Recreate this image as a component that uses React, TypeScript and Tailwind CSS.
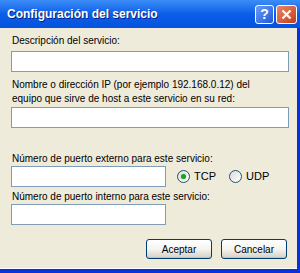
import React from "react"

function XpInput({ className = "" }: { className?: string }) {
    return (
        <input
            type="text"
            className={`block h-[21px] border border-[#7f9db9] bg-white outline-none ${className}`}
        />
    )
}

function XpRadio({ label, checked }: { label: string; checked?: boolean }) {
    return (
        <label className="flex items-center gap-[4px]">
            <span className="flex h-[13px] w-[13px] items-center justify-center rounded-full border border-[#1c5180] bg-gradient-to-br from-[#dcdcd7] to-white">
                {checked && (
                    <span className="h-[5px] w-[5px] rounded-full bg-[#21a121] shadow-[0_0_1px_#5ed35e]" />
                )}
            </span>
            <span>{label}</span>
        </label>
    )
}

function XpButton({ children }: { children: React.ReactNode }) {
    return (
        <button className="h-[20px] w-[66px] rounded-[3px] border border-[#003c74] bg-gradient-to-b from-white via-[#f4f4f0] to-[#d6d0c5] text-[10px] text-black shadow-[inset_0_-1px_0_#c9c3b5]">
            {children}
        </button>
    )
}

export default function App() {
    return (
        <div
            className="flex h-[273px] w-[300px] flex-col overflow-hidden bg-[#0831d9] text-[10px] text-black"
            style={{ fontFamily: '"Liberation Sans", Arial, sans-serif' }}
        >
            {/* title bar */}
            <div className="flex h-[28px] items-center justify-between bg-gradient-to-b from-[#3c8cf7] via-[#0a5ee8] to-[#0652dd] pl-[7px] pr-[3px]">
                <span className="text-[12px] font-bold text-white [text-shadow:1px_1px_0_#0a1f80]">
                    Configuración del servicio
                </span>
                <div className="flex gap-[2px]">
                    <div className="flex h-[19px] w-[19px] items-center justify-center rounded-[3px] border border-white bg-gradient-to-br from-[#6b9cf8] to-[#1e57d8] text-[14px] font-bold leading-none text-white">
                        ?
                    </div>
                    <div className="flex h-[19px] w-[21px] items-center justify-center rounded-[3px] border border-white bg-gradient-to-br from-[#e8866a] to-[#c63b12]">
                        <svg width="11" height="11" viewBox="0 0 11 11">
                            <path d="M1.5 1.5 L9.5 9.5 M9.5 1.5 L1.5 9.5" stroke="white" strokeWidth="2.2" />
                        </svg>
                    </div>
                </div>
            </div>

            {/* body */}
            <div className="mr-[3px] mb-[4px] flex flex-1 flex-col border-b border-white bg-[#efebda] pl-[11px] pr-[8px] pt-[6px]">
                <div className="pl-[1px] leading-[13px]">Descripción del servicio:</div>
                <XpInput className="mt-[4px] w-[278px]" />

                <div className="mt-[6px] pl-[1px] leading-[14px]">
                    Nombre o dirección IP (por ejemplo 192.168.0.12) del
                    <br />
                    equipo que sirve de host a este servicio en su red:
                </div>
                <XpInput className="mt-[1px] w-[278px]" />

                <div className="mt-[24px] pl-[1px] leading-[13px]">
                    Número de puerto externo para este servicio:
                </div>
                <div className="mt-[1px] flex items-center">
                    <XpInput className="w-[155px]" />
                    <div className="ml-[11px] flex gap-[13px] text-[11px]">
                        <XpRadio label="TCP" checked />
                        <XpRadio label="UDP" />
                    </div>
                </div>

                <div className="mt-[3px] pl-[1px] leading-[13px]">
                    Número de puerto interno para este servicio:
                </div>
                <XpInput className="mt-[1px] w-[155px]" />

                <div className="mt-[14px] flex justify-end gap-[9px] pr-[2px]">
                    <XpButton>Aceptar</XpButton>
                    <XpButton>Cancelar</XpButton>
                </div>
            </div>
        </div>
    )
}
